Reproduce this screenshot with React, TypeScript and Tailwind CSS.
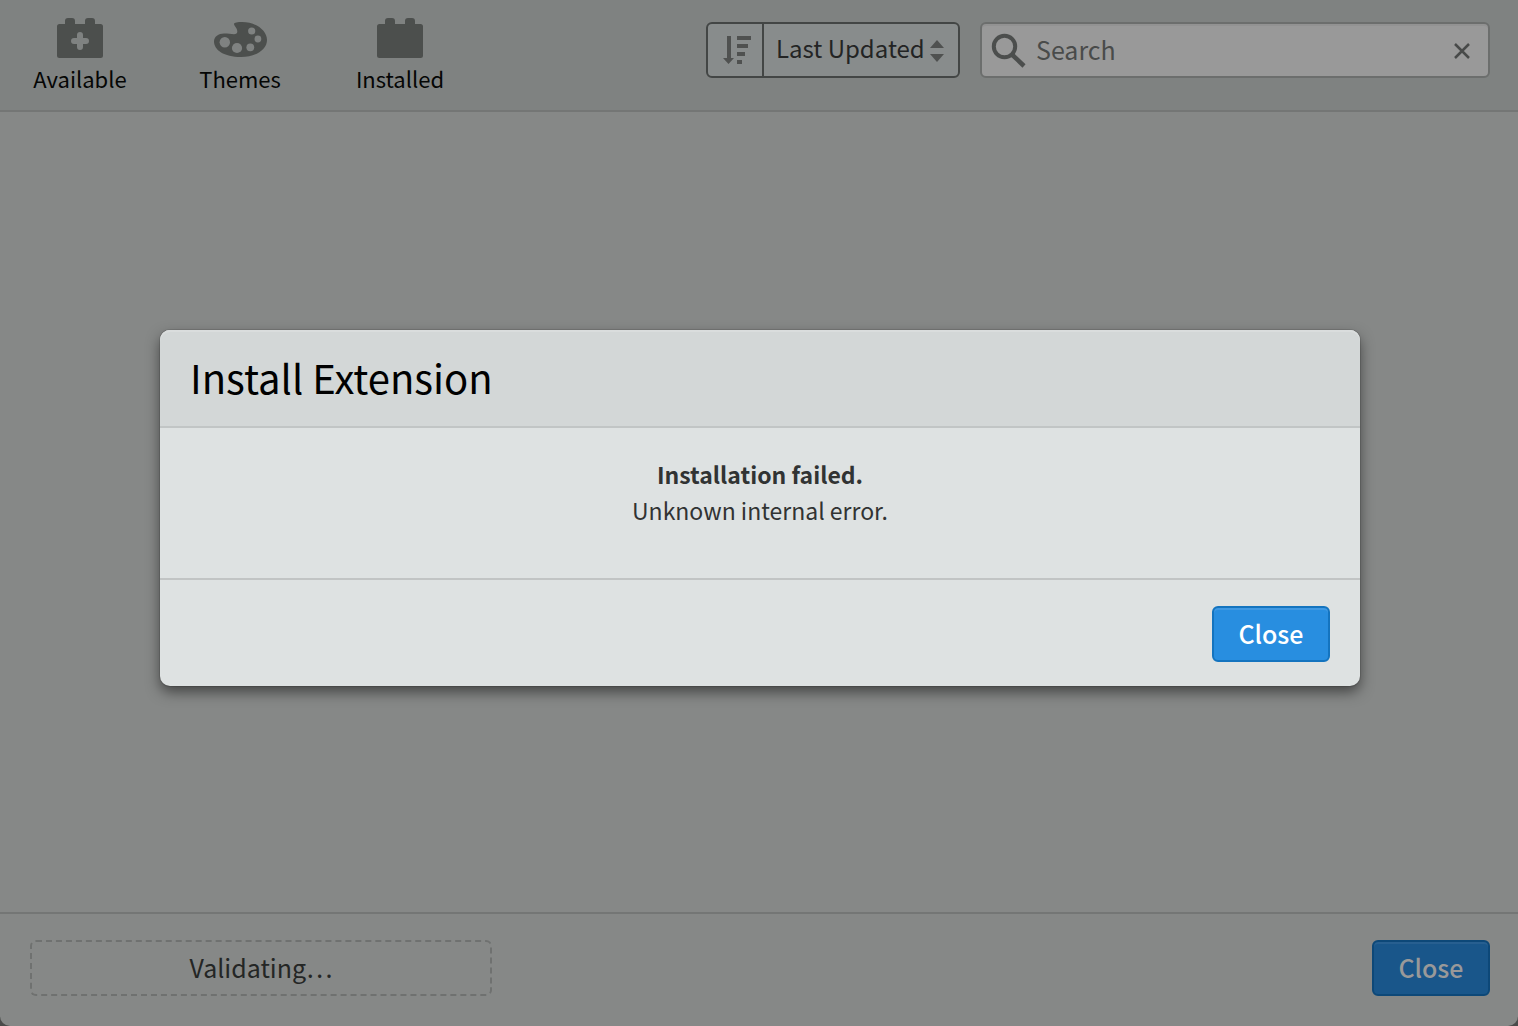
import { useState } from "react";

function BrickIcon({ plus = false }: { plus?: boolean }) {
  return (
    <svg width="46" height="40" viewBox="0 0 46 40" fill="#4c4f4d" aria-hidden="true">
      <path d="M2.500 6H8V3A3 3 0 0 1 11 0H15A3 3 0 0 1 18 3V6H28V3A3 3 0 0 1 31 0H35A3 3 0 0 1 38 3V6H43.500A2.500 2.500 0 0 1 46 8.500V37.500A2.500 2.500 0 0 1 43.500 40H2.500A2.500 2.500 0 0 1 0 37.500V8.500A2.500 2.500 0 0 1 2.500 6Z" />
      {plus && (
        <path d="M23 17V29M17 23H29" stroke="#7f8281" strokeWidth="6" strokeLinecap="round" />
      )}
    </svg>
  );
}

function PaletteIcon() {
  return (
    <svg width="54" height="40" viewBox="0 0 54 40" aria-hidden="true">
      <path
        fill="#4c4f4d"
        d="M21 6C21 4.500 25 4 29 4C43 4 54 12.500 54 22C54 31.500 43 39 28 39C11 39 1 32 1 23.500C1 18.500 5.500 15.500 11 15.500C15 15.500 18 16.200 21 16.200C24.500 16.200 25 13.500 23.500 10.500C22.500 8.500 21 7.500 21 6Z"
      />
      <g fill="#7f8281">
        <circle cx="11.800" cy="24.300" r="5.200" />
        <circle cx="24" cy="30" r="5.100" />
        <circle cx="37.300" cy="29.300" r="3.900" />
        <circle cx="44.900" cy="21" r="3.400" />
        <circle cx="38.700" cy="13" r="3.600" />
      </g>
    </svg>
  );
}

const tabs = [
  { label: "Available", icon: <BrickIcon plus /> },
  { label: "Themes", icon: <PaletteIcon /> },
  { label: "Installed", icon: <BrickIcon /> },
];

export default function App() {
  const [query, setQuery] = useState("");

  return (
    <div className="relative flex min-h-screen flex-col bg-[#4a4b4a] font-['Noto_Sans_CJK_SC',sans-serif]">
      <div className="flex flex-1 flex-col overflow-hidden rounded-b-[10px] bg-[#868887]">
        <header className="flex h-28 items-start justify-between border-b-2 border-[#747675] bg-[#7f8281] pr-7">
          <nav className="flex">
            {tabs.map((tab) => (
              <button
                key={tab.label}
                type="button"
                className="flex w-40 flex-col items-center pt-[18px] text-[22px] leading-8 text-[#050605]"
              >
                {tab.icon}
                <span className="mt-1">{tab.label}</span>
              </button>
            ))}
          </nav>

          <div className="mt-[22px] flex gap-5">
            <div className="flex h-14 overflow-hidden rounded-md border-2 border-[#434645] bg-[#888c8c]">
              <button
                type="button"
                aria-label="Sort direction"
                className="flex w-14 items-center justify-center border-r-2 border-[#434645] pl-1"
              >
                <svg width="28" height="28" viewBox="0 0 28 28" fill="#4f5150" aria-hidden="true">
                  <path d="M4 0H8V22H11L5.500 28L0 22H4ZM14 0H28V4H14ZM14 8H25V12H14ZM14 16H22V20H14ZM14 24H19V28H14Z" />
                </svg>
              </button>
              <div className="relative">
                <select
                  aria-label="Sort by"
                  className="h-full w-[194px] appearance-none bg-transparent pb-1 pl-3 text-[24px] leading-8 text-[#232424] outline-none"
                >
                  <option>Last Updated</option>
                  <option>Downloads</option>
                </select>
                <svg
                  className="pointer-events-none absolute top-4 right-[14px]"
                  width="14"
                  height="22"
                  viewBox="0 0 14 22"
                  fill="#4f5150"
                  aria-hidden="true"
                >
                  <path d="M7 0L14 8H0ZM7 22L14 14H0Z" />
                </svg>
              </div>
            </div>

            <div className="flex h-14 w-[510px] items-center rounded-md border-2 border-[#6c6e6d] bg-[#999999] pr-[14px] pl-[9px] shadow-[inset_0_2px_0_#929292]">
              <svg width="36" height="36" viewBox="0 0 36 36" fill="none" stroke="#4c4e4d" aria-hidden="true">
                <circle cx="13.500" cy="14.500" r="10.700" strokeWidth="4" />
                <path d="M21.500 23L33 34" strokeWidth="4.500" />
              </svg>
              <input
                type="text"
                aria-label="Search"
                placeholder="Search"
                value={query}
                onChange={(event) => setQuery(event.target.value)}
                className="ml-[9px] min-w-0 flex-1 bg-transparent pb-0.5 text-[25px] leading-8 text-[#232424] outline-none placeholder:text-[#494b4a]"
              />
              <button type="button" aria-label="Clear search" onClick={() => setQuery("")} className="p-1">
                <svg width="16" height="18" viewBox="0 0 16 18" stroke="#484a49" strokeWidth="2.500" aria-hidden="true">
                  <path d="M1 3L15 17M15 3L1 17" />
                </svg>
              </button>
            </div>
          </div>
        </header>

        <main className="flex-1" />

        <footer className="flex h-[114px] items-start justify-between border-t-2 border-[#747675] pt-[26px] pr-7 pl-[30px]">
          <div className="flex h-14 w-[462px] items-center justify-center rounded-md border-2 border-dashed border-[#6f7170] pb-0.5 text-[25px] leading-8 text-[#242625]">
            Validating…
          </div>
          <button
            type="button"
            className="h-14 w-[118px] rounded-md border-2 border-[#0d4878] bg-[#19568a] pb-0.5 text-[25px] leading-8 font-medium text-[#999999] shadow-[inset_0_2px_0_#275f90]"
          >
            Close
          </button>
        </footer>
      </div>

      <div className="absolute inset-0 flex items-center justify-center pr-[158px] pb-[10px] pl-40">
        <section
          role="dialog"
          aria-modal="true"
          aria-labelledby="dialog-title"
          className="w-full rounded-[10px] bg-[#dee2e2] shadow-[0_0_0_1px_rgba(0,0,0,0.1),0_6px_14px_rgba(0,0,0,0.5)]"
        >
          <div className="flex h-[98px] items-center rounded-t-[10px] border-b-2 border-[#c1c5c5] bg-[#d3d7d7] px-[30px] pb-0.5 shadow-[inset_0_2px_0_#dadddd]">
            <h1 id="dialog-title" className="text-[40px] leading-[56px] text-black">
              Install Extension
            </h1>
          </div>
          <div className="h-[150px] pt-7 text-center text-[23px] leading-9 text-[#313333]">
            <p className="font-bold">Installation failed.</p>
            <p>Unknown internal error.</p>
          </div>
          <div className="flex h-[108px] items-start justify-end border-t-2 border-[#c1c4c4] px-[30px] pt-[26px]">
            <button
              type="button"
              className="h-14 w-[118px] rounded-md border-2 border-[#1474bf] bg-[#288ee0] pb-0.5 text-[25px] leading-8 font-medium text-white shadow-[inset_0_2px_0_#4099e3]"
            >
              Close
            </button>
          </div>
        </section>
      </div>
    </div>
  );
}
